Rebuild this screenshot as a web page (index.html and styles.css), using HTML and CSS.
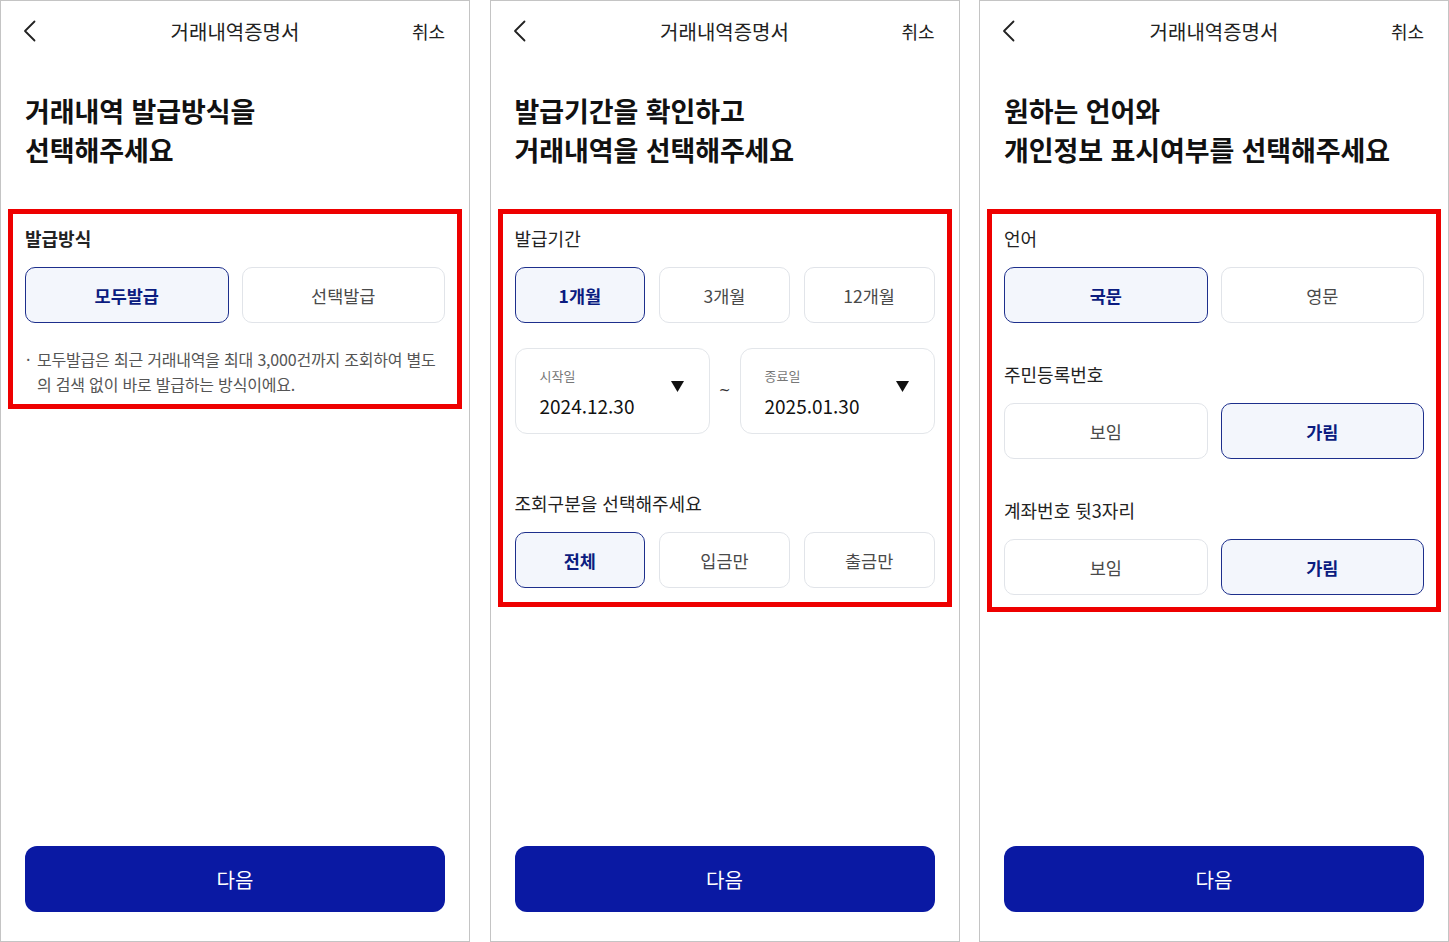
FILE: index.html
```html
<!DOCTYPE html>
<html lang="ko">
<head>
<meta charset="utf-8">
<title>거래내역증명서</title>
<link rel="stylesheet" href="styles.css">
</head>
<body>
<div class="screens">

  <div class="panel">
    <header class="topbar">
      <span class="back"><svg width="14" height="22" viewBox="0 0 14 22"><path d="M12.5 1.5 L3 11 L12.5 20.5" fill="none" stroke="#222" stroke-width="1.8" stroke-linecap="round" stroke-linejoin="round"/></svg></span>
      <h1 class="title">거래내역증명서</h1>
      <span class="cancel">취소</span>
    </header>
    <h2 class="heading">거래내역 발급방식을<br>선택해주세요</h2>
    <section class="group group-note">
      <div class="field">
        <div class="label label-bold">발급방식</div>
        <div class="options two">
          <div class="opt selected">모두발급</div>
          <div class="opt">선택발급</div>
        </div>
      </div>
      <p class="note"><span class="dot">·</span><span>모두발급은 최근 거래내역을 최대 3,000건까지 조회하여 별도의 검색 없이 바로 발급하는 방식이에요.</span></p>
    </section>
    <button class="next">다음</button>
  </div>

  <div class="panel">
    <header class="topbar">
      <span class="back"><svg width="14" height="22" viewBox="0 0 14 22"><path d="M12.5 1.5 L3 11 L12.5 20.5" fill="none" stroke="#222" stroke-width="1.8" stroke-linecap="round" stroke-linejoin="round"/></svg></span>
      <h1 class="title">거래내역증명서</h1>
      <span class="cancel">취소</span>
    </header>
    <h2 class="heading">발급기간을 확인하고<br>거래내역을 선택해주세요</h2>
    <section class="group group-period">
      <div class="field">
        <div class="label">발급기간</div>
        <div class="options three">
          <div class="opt selected">1개월</div>
          <div class="opt">3개월</div>
          <div class="opt">12개월</div>
        </div>
      </div>
      <div class="dates">
        <div class="date">
          <div class="date-text">
            <span class="date-label">시작일</span>
            <span class="date-value">2024.12.30</span>
          </div>
          <svg class="caret" width="13" height="11" viewBox="0 0 13 11"><polygon points="0,0 13,0 6.5,11" fill="#111"/></svg>
        </div>
        <span class="tilde">~</span>
        <div class="date">
          <div class="date-text">
            <span class="date-label">종료일</span>
            <span class="date-value">2025.01.30</span>
          </div>
          <svg class="caret" width="13" height="11" viewBox="0 0 13 11"><polygon points="0,0 13,0 6.5,11" fill="#111"/></svg>
        </div>
      </div>
      <div class="field field-far">
        <div class="label">조회구분을 선택해주세요</div>
        <div class="options three">
          <div class="opt selected">전체</div>
          <div class="opt">입금만</div>
          <div class="opt">출금만</div>
        </div>
      </div>
    </section>
    <button class="next">다음</button>
  </div>

  <div class="panel">
    <header class="topbar">
      <span class="back"><svg width="14" height="22" viewBox="0 0 14 22"><path d="M12.5 1.5 L3 11 L12.5 20.5" fill="none" stroke="#222" stroke-width="1.8" stroke-linecap="round" stroke-linejoin="round"/></svg></span>
      <h1 class="title">거래내역증명서</h1>
      <span class="cancel">취소</span>
    </header>
    <h2 class="heading">원하는 언어와<br>개인정보 표시여부를 선택해주세요</h2>
    <section class="group">
      <div class="field">
        <div class="label">언어</div>
        <div class="options two">
          <div class="opt selected">국문</div>
          <div class="opt">영문</div>
        </div>
      </div>
      <div class="field field-next">
        <div class="label">주민등록번호</div>
        <div class="options two">
          <div class="opt">보임</div>
          <div class="opt selected">가림</div>
        </div>
      </div>
      <div class="field field-next">
        <div class="label">계좌번호 뒷3자리</div>
        <div class="options two">
          <div class="opt">보임</div>
          <div class="opt selected">가림</div>
        </div>
      </div>
    </section>
    <button class="next">다음</button>
  </div>

</div>
</body>
</html>
```
FILE: styles.css
```css
* { box-sizing: border-box; }

html, body {
  margin: 0;
  padding: 0;
  background: #fff;
}

body {
  font-family: "Noto Sans CJK KR", "Noto Sans", sans-serif;
  color: #222;
  width: 1449px;
  height: 942px;
  overflow: hidden;
}

.screens {
  display: flex;
  justify-content: space-between;
  width: 1449px;
  height: 942px;
}

.panel {
  width: 470px;
  height: 942px;
  border: 1px solid #c4c4c4;
  padding: 0 24px;
  display: flex;
  flex-direction: column;
  background: #fff;
}

.topbar {
  height: 60px;
  display: grid;
  grid-template-columns: 1fr auto 1fr;
  align-items: center;
}

.back {
  display: flex;
  align-items: center;
  margin-left: -3px;
}

.title {
  margin: 0;
  font-size: 20px;
  font-weight: 400;
  color: #222;
  letter-spacing: 0;
}

.cancel {
  justify-self: end;
  font-size: 18px;
  color: #222;
}

.heading {
  margin: 30px 0 0;
  font-size: 27px;
  line-height: 39px;
  font-weight: 700;
  color: #111;
  letter-spacing: -0.1px;
}

.group {
  margin: 40px -17px 0;
  border: 5px solid #ee0000;
  padding: 13px 12px 12px;
}

.group-note { padding-bottom: 7px; }
.group-period { padding-bottom: 14px; }

.label {
  font-size: 18px;
  line-height: 22px;
  color: #222;
  margin-bottom: 18px;
  letter-spacing: 0;
}

.label-bold { font-weight: 700; }

.field-next { margin-top: 40px; }
.field-far { margin-top: 58px; }

.options {
  display: grid;
  gap: 13px;
}

.options.two { grid-template-columns: 1fr 1fr; }
.options.three { grid-template-columns: 1fr 1fr 1fr; gap: 14px; }

.opt {
  height: 56px;
  border: 1px solid #e1e4e9;
  border-radius: 10px;
  display: flex;
  align-items: center;
  justify-content: center;
  font-size: 17.5px;
  color: #4a4a4a;
  background: #fff;
  letter-spacing: 0;
}

.opt.selected {
  border: 1.5px solid #1d2f8c;
  background: #f3f6fc;
  color: #0b1c80;
  font-weight: 700;
}

.note {
  margin: 24px 0 0;
  display: flex;
  font-size: 16px;
  line-height: 25px;
  color: #555;
  letter-spacing: -0.2px;
}

.note .dot {
  flex: 0 0 12px;
  padding-left: 1px;
}

.dates {
  margin-top: 25px;
  display: grid;
  grid-template-columns: 1fr 30px 1fr;
  align-items: center;
}

.date {
  height: 86px;
  border: 1px solid #e3e6ea;
  border-radius: 12px;
  padding: 0 25px 0 24px;
  display: flex;
  align-items: center;
  justify-content: space-between;
}

.date-text {
  display: flex;
  flex-direction: column;
  padding-top: 3px;
}

.date-label {
  font-size: 13px;
  line-height: 18px;
  color: #777;
}

.date-value {
  margin-top: 9px;
  font-size: 19px;
  line-height: 24px;
  color: #111;
  letter-spacing: 0;
}

.caret {
  margin-top: -10px;
}

.tilde {
  text-align: center;
  font-family: "DejaVu Sans", sans-serif;
  font-size: 14px;
  color: #333;
  margin-top: -2px;
}

.next {
  margin-top: auto;
  margin-bottom: 29px;
  height: 66px;
  width: 100%;
  border: none;
  border-radius: 12px;
  background: #0a19a3;
  color: #fff;
  font-family: inherit;
  font-size: 20px;
  font-weight: 400;
}
```
